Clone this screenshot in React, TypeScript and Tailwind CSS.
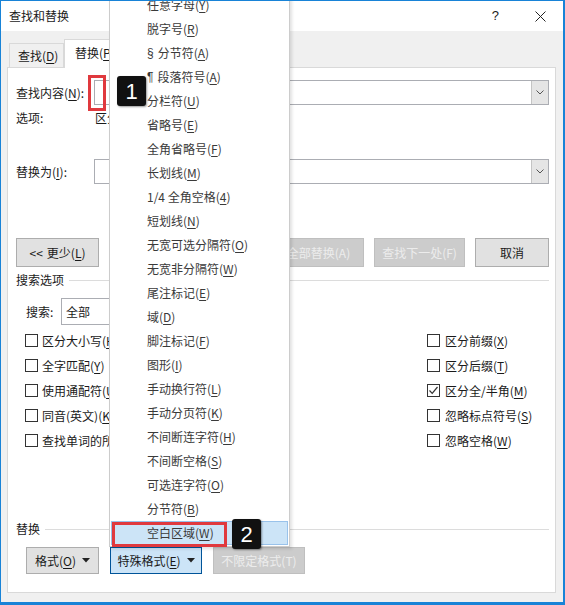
import React from 'react';

const FONT = "font-['Noto_Sans_CJK_SC','Noto_Sans','Liberation_Sans',sans-serif]";

// label like 任意字母(Y) with the access key underlined
function K({ t, k }: { t: string; k?: string }) {
  const sym = t[0] === '§' || t[0] === '¶';
  const body = sym ? (
    <>
      <span className="font-['Liberation_Sans',sans-serif] mr-[4px]">{t[0]}</span>
      {t.slice(2)}
    </>
  ) : (
    t
  );
  if (!k) return <>{body}</>;
  return (
    <>
      {body}(<u className="underline-offset-2">{k}</u>)
    </>
  );
}

const menuItems: [string, string][] = [
  ['任意字母', 'Y'],
  ['脱字号', 'R'],
  ['§ 分节符', 'A'],
  ['¶ 段落符号', 'A'],
  ['分栏符', 'U'],
  ['省略号', 'E'],
  ['全角省略号', 'F'],
  ['长划线', 'M'],
  ['1/4 全角空格', '4'],
  ['短划线', 'N'],
  ['无宽可选分隔符', 'O'],
  ['无宽非分隔符', 'W'],
  ['尾注标记', 'E'],
  ['域', 'D'],
  ['脚注标记', 'F'],
  ['图形', 'I'],
  ['手动换行符', 'L'],
  ['手动分页符', 'K'],
  ['不间断连字符', 'H'],
  ['不间断空格', 'S'],
  ['可选连字符', 'O'],
  ['分节符', 'B'],
  ['空白区域', 'W'],
];

const leftChecks: [string, string][] = [
  ['区分大小写', 'H'],
  ['全字匹配', 'Y'],
  ['使用通配符', 'U'],
  ['同音(英文)', 'K'],
  ['查找单词的所有形式(英文)', 'W'],
];

const rightChecks: [string, string, boolean][] = [
  ['区分前缀', 'X', false],
  ['区分后缀', 'T', false],
  ['区分全/半角', 'M', true],
  ['忽略标点符号', 'S', false],
  ['忽略空格', 'W', false],
];

function Checkbox({ checked }: { checked?: boolean }) {
  return (
    <span className="w-[13px] h-[13px] border border-[#333] bg-white flex items-center justify-center shrink-0">
      {checked && (
        <svg width="11" height="11" viewBox="0 0 11 11">
          <path d="M1.5 5.5 L4.2 8.3 L9.5 2" fill="none" stroke="#333" strokeWidth="1.2" />
        </svg>
      )}
    </span>
  );
}

function Caret() {
  return (
    <svg width="8" height="5" viewBox="0 0 8 5" className="ml-[6px]">
      <path d="M0 0 H8 L4 4.5 Z" fill="#222" />
    </svg>
  );
}

function Combo() {
  return (
    <div className="flex-1 h-[25px] border border-[#abadb3] bg-white flex justify-end">
      <div className="w-[17px] h-full bg-[#e5e5e5] border-l border-[#c4c4c4] flex items-center justify-center">
        <svg width="8" height="5" viewBox="0 0 8 5">
          <path d="M0.5 0.5 L4 4 L7.5 0.5" fill="none" stroke="#555" strokeWidth="1" />
        </svg>
      </div>
    </div>
  );
}

function Separator({ label }: { label: string }) {
  return (
    <div className="flex items-center h-[16px]">
      <span className="leading-[16px]">{label}</span>
      <div className="flex-1 h-px bg-[#dcdcdc] ml-[5px]" />
    </div>
  );
}

export default function App() {
  return (
    <div
      className={`relative w-[565px] h-[605px] overflow-hidden bg-[#f0f0f0] border-l border-t border-r-2 border-b-[3px] border-[#1883d7] flex flex-col text-[12px] text-[#1a1a1a] ${FONT}`}
    >
      {/* Title bar */}
      <div className="h-[30px] bg-white flex items-center justify-between pl-[8px] pr-[17px] shrink-0">
        <span className="leading-[16px] -mt-[1px]">查找和替换</span>
        <div className="flex items-center gap-[36px]">
          <span className="text-[13px] leading-[16px] font-['Liberation_Sans',sans-serif]">?</span>
          <svg width="11" height="11" viewBox="0 0 11 11">
            <path d="M0.5 0.5 L10.5 10.5 M10.5 0.5 L0.5 10.5" stroke="#222" strokeWidth="1" />
          </svg>
        </div>
      </div>

      {/* Tabs */}
      <div className="h-[36px] flex items-end pl-[8px] shrink-0">
        <div className="w-[55px] h-[24px] border border-b-0 border-[#d9d9d9] flex items-center pl-[8px] leading-[16px]">
          <K t="查找" k="D" />
        </div>
        <div className="w-[60px] h-[29px] bg-white border border-b-0 border-[#d9d9d9] -mb-px relative z-10 flex items-center pl-[10px] pb-[3px] leading-[16px]">
          <K t="替换" k="P" />
        </div>
      </div>

      {/* Panel */}
      <div className="flex-1 ml-[6px] mr-[7px] mb-[9px] bg-white border border-[#d9d9d9] flex flex-col pl-[8px] pr-[6px]">
        <div className="mt-[12px] flex items-center">
          <span className="w-[78px] leading-[16px]">
            <K t="查找内容" k="N" />:
          </span>
          <Combo />
        </div>

        <div className="mt-[5px] flex items-center h-[16px]">
          <span className="w-[79px] leading-[16px]">选项:</span>
          <span className="leading-[16px]">区分全/半角</span>
        </div>

        <div className="mt-[33px] flex items-center">
          <span className="w-[78px] leading-[16px]">
            <K t="替换为" k="I" />:
          </span>
          <Combo />
        </div>

        <div className="mt-[54px] flex justify-between h-[29px]">
          <div className="w-[83px] bg-[#e1e1e1] border border-[#adadad] flex items-center justify-center leading-[16px]">
            {'<< '}
            <span className="ml-[4px]">
              <K t="更少" k="L" />
            </span>
          </div>
          <div className="flex gap-[10px]">
            <div className="w-[91px] bg-[#cccccc] border border-[#bfbfbf] text-[#ececec] flex items-center justify-center">替换(R)</div>
            <div className="w-[91px] bg-[#cccccc] border border-[#bfbfbf] text-[#ececec] flex items-center justify-center">全部替换(A)</div>
            <div className="w-[91px] bg-[#cccccc] border border-[#bfbfbf] text-[#ececec] flex items-center justify-center">查找下一处(F)</div>
            <div className="w-[74px] bg-[#e1e1e1] border border-[#adadad] flex items-center justify-center">取消</div>
          </div>
        </div>

        <div className="mt-[5px]">
          <Separator label="搜索选项" />
        </div>

        <div className="mt-[10px] flex items-center ml-[10px]">
          <span className="w-[35px] leading-[16px]">搜索:</span>
          <div className="w-[130px] h-[27px] border border-[#abadb3] flex items-center pl-[4px] leading-[16px]">全部</div>
        </div>

        <div className="mt-[3px] flex ml-[9px]">
          <div className="w-[402px] flex flex-col">
            {leftChecks.map(([t, k]) => (
              <div key={t} className="h-[25px] flex items-center gap-[4px]">
                <Checkbox />
                <span className="leading-[16px] whitespace-nowrap">
                  <K t={t} k={k} />
                </span>
              </div>
            ))}
          </div>
          <div className="flex flex-col">
            {rightChecks.map(([t, k, c]) => (
              <div key={t} className="h-[25px] flex items-center gap-[5px]">
                <Checkbox checked={c} />
                <span className="leading-[16px] whitespace-nowrap">
                  <K t={t} k={k} />
                </span>
              </div>
            ))}
          </div>
        </div>

        <div className="mt-[68px]">
          <Separator label="替换" />
        </div>

        <div className="mt-[10px] ml-[10px] flex gap-[11px] h-[27px]">
          <div className="w-[73px] bg-[#e1e1e1] border border-[#adadad] flex items-center justify-center leading-[16px]">
            <K t="格式" k="O" />
            <Caret />
          </div>
          <div className="w-[92px] bg-[#cce4f7] border border-[#005499] flex items-center justify-center leading-[16px]">
            <K t="特殊格式" k="E" />
            <Caret />
          </div>
          <div className="w-[92px] bg-[#cccccc] border border-[#bfbfbf] text-[#ececec] flex items-center justify-center leading-[16px]">
            不限定格式(T)
          </div>
        </div>
      </div>

      {/* Special format dropdown menu */}
      <div className="absolute left-[108px] top-[-10px] w-[181px] bg-white border border-[#cccccc] p-px shadow-[2px_2px_3px_rgba(0,0,0,0.12)] z-20">
        {menuItems.map(([t, k], i) => {
          const active = i === menuItems.length - 1;
          return (
            <div
              key={i}
              className={`h-[24px] flex items-center pl-[35px] leading-[16px] text-[#3a3a3a] ${
                active ? 'bg-[#cce4f7] border border-[#99c2ea]' : 'border border-transparent'
              }`}
            >
              <K t={t} k={k} />
            </div>
          );
        })}
      </div>

      {/* Callouts */}
      <div className="absolute left-[87px] top-[74px] w-[18px] h-[36px] border-[3px] border-[#e0393e] z-30" />
      <div className="absolute left-[116px] top-[75px] w-[29px] h-[30px] rounded-[3px] bg-[#111] text-white flex items-center justify-center text-[22px] font-['Liberation_Sans',sans-serif] shadow-[1px_1px_2px_rgba(0,0,0,0.4)] z-30">
        1
      </div>
      <div className="absolute left-[111px] top-[521px] w-[115px] h-[25px] border-[3px] border-[#e0393e] z-30" />
      <div className="absolute left-[231px] top-[518px] w-[29px] h-[30px] rounded-[3px] bg-[#111] text-white flex items-center justify-center text-[22px] font-['Liberation_Sans',sans-serif] shadow-[1px_1px_2px_rgba(0,0,0,0.4)] z-30">
        2
      </div>
    </div>
  );
}
